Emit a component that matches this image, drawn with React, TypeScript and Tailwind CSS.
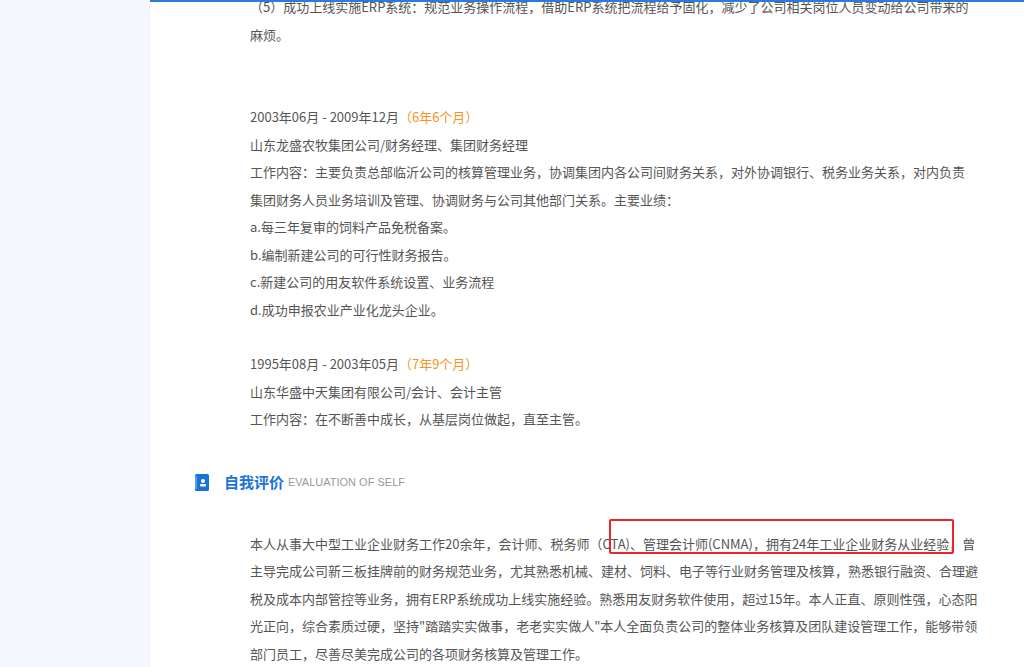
export default function App() {
  const f = { fontFamily: '"Microsoft YaHei","Noto Sans CJK SC","Liberation Sans",sans-serif' };
  const L = ({ children }: { children: React.ReactNode }) => <div className="h-[27.5px] leading-[27.5px]">{children}</div>;
  return (
    <div className="w-[1024px] h-[667px] overflow-hidden flex bg-white text-[13px] text-[#555]" style={f}>
      <div className="w-[150px] bg-[#f4f7fb] shrink-0" />
      <div className="flex-1 relative">
        <div className="absolute top-0 left-0 right-0 h-[2px] bg-[#2b7bd8]" />
        <div className="pl-[100px] -mt-[7px]">
          <L>（5）成功上线实施ERP系统：规范业务操作流程，借助ERP系统把流程给予固化，减少了公司相关岗位人员变动给公司带来的</L>
          <L>麻烦。</L>
          <div className="h-[55px]" />
          <L>2003年06月 - 2009年12月<span className="text-[#f7931e]">（6年6个月）</span></L>
          <L>山东龙盛农牧集团公司/财务经理、集团财务经理</L>
          <L>工作内容：主要负责总部临沂公司的核算管理业务，协调集团内各公司间财务关系，对外协调银行、税务业务关系，对内负责</L>
          <L>集团财务人员业务培训及管理、协调财务与公司其他部门关系。主要业绩：</L>
          <L>a.每三年复审的饲料产品免税备案。</L>
          <L>b.编制新建公司的可行性财务报告。</L>
          <L>c.新建公司的用友软件系统设置、业务流程</L>
          <L>d.成功申报农业产业化龙头企业。</L>
          <div className="h-[27px]" />
          <L>1995年08月 - 2003年05月<span className="text-[#f7931e]">（7年9个月）</span></L>
          <L>山东华盛中天集团有限公司/会计、会计主管</L>
          <L>工作内容：在不断善中成长，从基层岗位做起，直至主管。</L>
        </div>
        <div className="flex items-center ml-[45px] mt-[35px] h-[30px]">
          <svg width="15" height="17" viewBox="0 0 15 17"><rect x="0" y="0" width="14" height="17" rx="1.5" fill="#1a73d9"/><rect x="0" y="2" width="2" height="13" fill="#5aa0ec"/><circle cx="8" cy="7" r="2" fill="#fff"/><rect x="5" y="10" width="6" height="2.5" rx="1" fill="#fff"/></svg>
          <span className="ml-[14px] text-[15px] font-bold text-[#1a73d9]">自我评价</span>
          <span className="ml-[4px] text-[11px] text-[#999]" style={{ fontFamily: '"Liberation Sans",sans-serif' }}>EVALUATION OF SELF</span>
        </div>
        <div className="pl-[100px] pr-[40px] mt-[32px] leading-[27.5px] relative">
          <div className="absolute left-[459px] top-[-11px] w-[345px] h-[35px] border-2 border-[#e8262c] rounded-[2px]" />
          <p>本人从事大中型工业企业财务工作20余年，会计师、税务师（CTA)、管理会计师(CNMA)，拥有24年工业企业财务从业经验，曾主导完成公司新三板挂牌前的财务规范业务，尤其熟悉机械、建材、饲料、电子等行业财务管理及核算，熟悉银行融资、合理避税及成本内部管控等业务，拥有ERP系统成功上线实施经验。熟悉用友财务软件使用，超过15年。本人正直、原则性强，心态阳光正向，综合素质过硬，坚持"踏踏实实做事，老老实实做人"本人全面负责公司的整体业务核算及团队建设管理工作，能够带领部门员工，尽善尽美完成公司的各项财务核算及管理工作。</p>
        </div>
      </div>
    </div>
  );
}
